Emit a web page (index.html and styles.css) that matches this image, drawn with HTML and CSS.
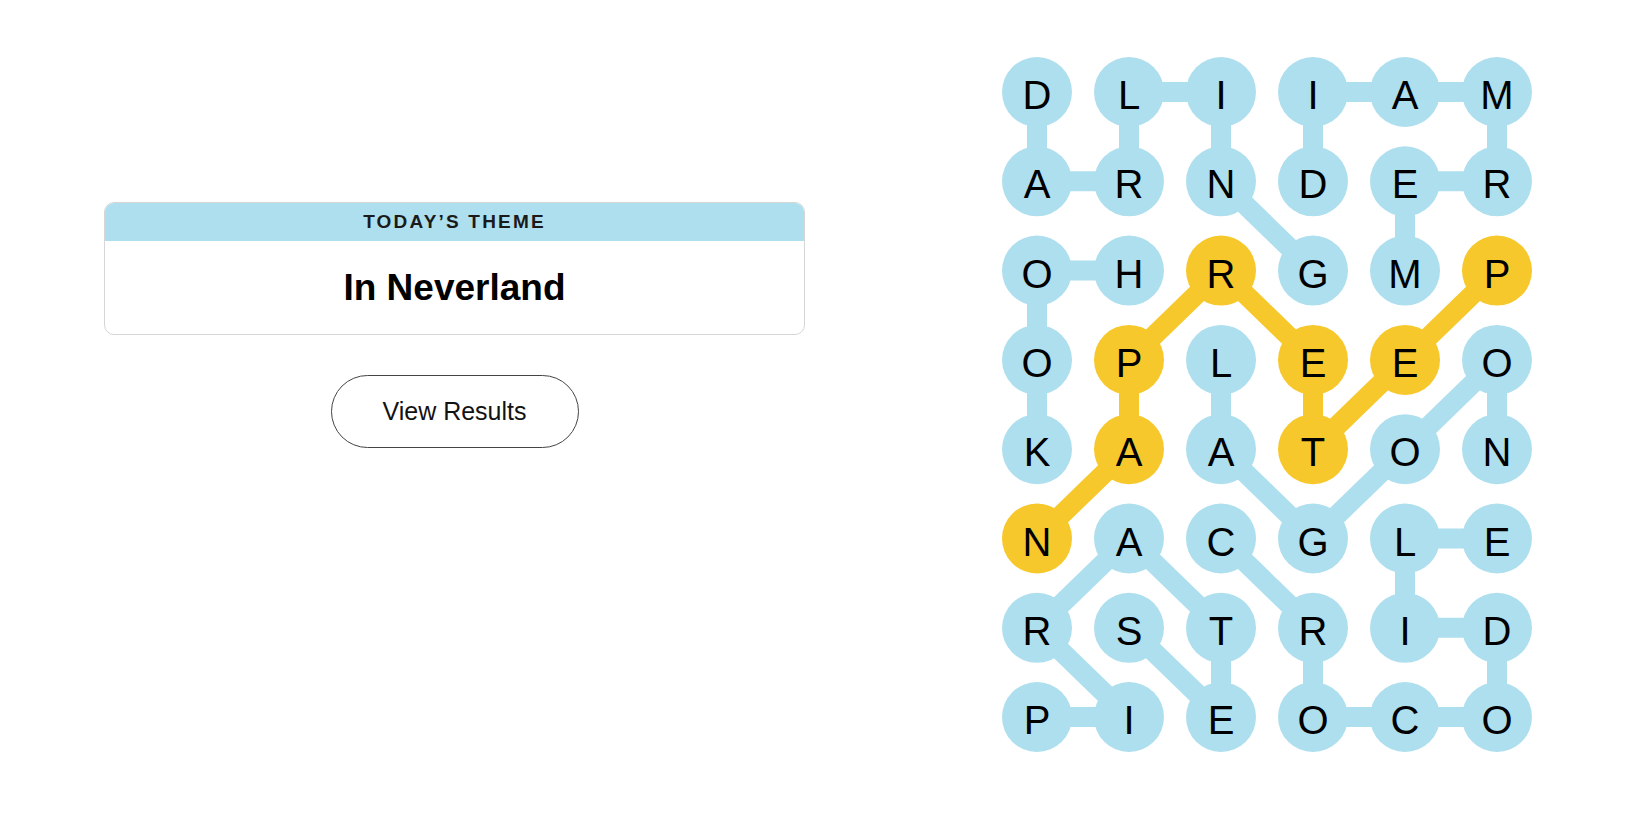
FILE: index.html
```html
<!DOCTYPE html>
<html lang="en">
<head>
<meta charset="utf-8">
<title>Strands</title>
<link rel="stylesheet" href="styles.css">
</head>
<body>
<main class="page">
  <section class="left">
    <div class="theme-card">
      <div class="theme-head">TODAY’S THEME</div>
      <div class="theme-body">In Neverland</div>
    </div>
    <button class="results-btn" type="button">View Results</button>
  </section>
  <section class="board">
    <svg class="board-svg" width="530" height="695" viewBox="0 0 530 695" xmlns="http://www.w3.org/2000/svg">
      <g class="links blue">
        <line x1="127" y1="35" x2="219" y2="35"/>
        <line x1="311" y1="35" x2="403" y2="35"/>
        <line x1="403" y1="35" x2="495" y2="35"/>
        <line x1="35" y1="35" x2="35" y2="124.3"/>
        <line x1="127" y1="35" x2="127" y2="124.3"/>
        <line x1="219" y1="35" x2="219" y2="124.3"/>
        <line x1="311" y1="35" x2="311" y2="124.3"/>
        <line x1="495" y1="35" x2="495" y2="124.3"/>
        <line x1="35" y1="124.3" x2="127" y2="124.3"/>
        <line x1="403" y1="124.3" x2="495" y2="124.3"/>
        <line x1="219" y1="124.3" x2="311" y2="213.6"/>
        <line x1="403" y1="124.3" x2="403" y2="213.6"/>
        <line x1="35" y1="213.6" x2="127" y2="213.6"/>
        <line x1="35" y1="213.6" x2="35" y2="302.9"/>
        <line x1="35" y1="302.9" x2="35" y2="392.2"/>
        <line x1="219" y1="302.9" x2="219" y2="392.2"/>
        <line x1="495" y1="302.9" x2="495" y2="392.2"/>
        <line x1="495" y1="302.9" x2="403" y2="392.2"/>
        <line x1="219" y1="392.2" x2="311" y2="481.5"/>
        <line x1="403" y1="392.2" x2="311" y2="481.5"/>
        <line x1="403" y1="481.5" x2="495" y2="481.5"/>
        <line x1="127" y1="481.5" x2="35" y2="570.8"/>
        <line x1="127" y1="481.5" x2="219" y2="570.8"/>
        <line x1="219" y1="481.5" x2="311" y2="570.8"/>
        <line x1="403" y1="481.5" x2="403" y2="570.8"/>
        <line x1="403" y1="570.8" x2="495" y2="570.8"/>
        <line x1="495" y1="570.8" x2="495" y2="660"/>
        <line x1="35" y1="570.8" x2="127" y2="660"/>
        <line x1="127" y1="570.8" x2="219" y2="660"/>
        <line x1="219" y1="570.8" x2="219" y2="660"/>
        <line x1="311" y1="570.8" x2="311" y2="660"/>
        <line x1="35" y1="660" x2="127" y2="660"/>
        <line x1="311" y1="660" x2="403" y2="660"/>
        <line x1="403" y1="660" x2="495" y2="660"/>
      </g>
      <g class="links gold">
        <line x1="35" y1="481.5" x2="127" y2="392.2"/>
        <line x1="127" y1="392.2" x2="127" y2="302.9"/>
        <line x1="127" y1="302.9" x2="219" y2="213.6"/>
        <line x1="219" y1="213.6" x2="311" y2="302.9"/>
        <line x1="311" y1="302.9" x2="311" y2="392.2"/>
        <line x1="311" y1="392.2" x2="403" y2="302.9"/>
        <line x1="403" y1="302.9" x2="495" y2="213.6"/>
      </g>
      <g class="cells">
        <g class="cell blue"><circle cx="35" cy="35" r="35"/><text x="35" y="52">D</text></g>
        <g class="cell blue"><circle cx="127" cy="35" r="35"/><text x="127" y="52">L</text></g>
        <g class="cell blue"><circle cx="219" cy="35" r="35"/><text x="219" y="52">I</text></g>
        <g class="cell blue"><circle cx="311" cy="35" r="35"/><text x="311" y="52">I</text></g>
        <g class="cell blue"><circle cx="403" cy="35" r="35"/><text x="403" y="52">A</text></g>
        <g class="cell blue"><circle cx="495" cy="35" r="35"/><text x="495" y="52">M</text></g>

        <g class="cell blue"><circle cx="35" cy="124.3" r="35"/><text x="35" y="141.3">A</text></g>
        <g class="cell blue"><circle cx="127" cy="124.3" r="35"/><text x="127" y="141.3">R</text></g>
        <g class="cell blue"><circle cx="219" cy="124.3" r="35"/><text x="219" y="141.3">N</text></g>
        <g class="cell blue"><circle cx="311" cy="124.3" r="35"/><text x="311" y="141.3">D</text></g>
        <g class="cell blue"><circle cx="403" cy="124.3" r="35"/><text x="403" y="141.3">E</text></g>
        <g class="cell blue"><circle cx="495" cy="124.3" r="35"/><text x="495" y="141.3">R</text></g>

        <g class="cell blue"><circle cx="35" cy="213.6" r="35"/><text x="35" y="230.6">O</text></g>
        <g class="cell blue"><circle cx="127" cy="213.6" r="35"/><text x="127" y="230.6">H</text></g>
        <g class="cell gold"><circle cx="219" cy="213.6" r="35"/><text x="219" y="230.6">R</text></g>
        <g class="cell blue"><circle cx="311" cy="213.6" r="35"/><text x="311" y="230.6">G</text></g>
        <g class="cell blue"><circle cx="403" cy="213.6" r="35"/><text x="403" y="230.6">M</text></g>
        <g class="cell gold"><circle cx="495" cy="213.6" r="35"/><text x="495" y="230.6">P</text></g>

        <g class="cell blue"><circle cx="35" cy="302.9" r="35"/><text x="35" y="319.9">O</text></g>
        <g class="cell gold"><circle cx="127" cy="302.9" r="35"/><text x="127" y="319.9">P</text></g>
        <g class="cell blue"><circle cx="219" cy="302.9" r="35"/><text x="219" y="319.9">L</text></g>
        <g class="cell gold"><circle cx="311" cy="302.9" r="35"/><text x="311" y="319.9">E</text></g>
        <g class="cell gold"><circle cx="403" cy="302.9" r="35"/><text x="403" y="319.9">E</text></g>
        <g class="cell blue"><circle cx="495" cy="302.9" r="35"/><text x="495" y="319.9">O</text></g>

        <g class="cell blue"><circle cx="35" cy="392.2" r="35"/><text x="35" y="409.2">K</text></g>
        <g class="cell gold"><circle cx="127" cy="392.2" r="35"/><text x="127" y="409.2">A</text></g>
        <g class="cell blue"><circle cx="219" cy="392.2" r="35"/><text x="219" y="409.2">A</text></g>
        <g class="cell gold"><circle cx="311" cy="392.2" r="35"/><text x="311" y="409.2">T</text></g>
        <g class="cell blue"><circle cx="403" cy="392.2" r="35"/><text x="403" y="409.2">O</text></g>
        <g class="cell blue"><circle cx="495" cy="392.2" r="35"/><text x="495" y="409.2">N</text></g>

        <g class="cell gold"><circle cx="35" cy="481.5" r="35"/><text x="35" y="498.5">N</text></g>
        <g class="cell blue"><circle cx="127" cy="481.5" r="35"/><text x="127" y="498.5">A</text></g>
        <g class="cell blue"><circle cx="219" cy="481.5" r="35"/><text x="219" y="498.5">C</text></g>
        <g class="cell blue"><circle cx="311" cy="481.5" r="35"/><text x="311" y="498.5">G</text></g>
        <g class="cell blue"><circle cx="403" cy="481.5" r="35"/><text x="403" y="498.5">L</text></g>
        <g class="cell blue"><circle cx="495" cy="481.5" r="35"/><text x="495" y="498.5">E</text></g>

        <g class="cell blue"><circle cx="35" cy="570.8" r="35"/><text x="35" y="587.8">R</text></g>
        <g class="cell blue"><circle cx="127" cy="570.8" r="35"/><text x="127" y="587.8">S</text></g>
        <g class="cell blue"><circle cx="219" cy="570.8" r="35"/><text x="219" y="587.8">T</text></g>
        <g class="cell blue"><circle cx="311" cy="570.8" r="35"/><text x="311" y="587.8">R</text></g>
        <g class="cell blue"><circle cx="403" cy="570.8" r="35"/><text x="403" y="587.8">I</text></g>
        <g class="cell blue"><circle cx="495" cy="570.8" r="35"/><text x="495" y="587.8">D</text></g>

        <g class="cell blue"><circle cx="35" cy="660" r="35"/><text x="35" y="677">P</text></g>
        <g class="cell blue"><circle cx="127" cy="660" r="35"/><text x="127" y="677">I</text></g>
        <g class="cell blue"><circle cx="219" cy="660" r="35"/><text x="219" y="677">E</text></g>
        <g class="cell blue"><circle cx="311" cy="660" r="35"/><text x="311" y="677">O</text></g>
        <g class="cell blue"><circle cx="403" cy="660" r="35"/><text x="403" y="677">C</text></g>
        <g class="cell blue"><circle cx="495" cy="660" r="35"/><text x="495" y="677">O</text></g>
      </g>
    </svg>
  </section>
</main>
</body>
</html>
```

FILE: styles.css
```css
* {
  box-sizing: border-box;
}

html, body {
  margin: 0;
  padding: 0;
  background: #ffffff;
}

body {
  font-family: "Liberation Sans", Arial, sans-serif;
  color: #000000;
}

.page {
  display: flex;
  width: 1650px;
  height: 825px;
  overflow: hidden;
}

.left {
  display: flex;
  flex-direction: column;
  align-items: center;
  width: 701px;
  margin-left: 104px;
  padding-top: 202px;
}

.theme-card {
  width: 701px;
  border: 1px solid #d6d6d6;
  border-radius: 10px;
  overflow: hidden;
}

.theme-head {
  height: 38px;
  background: #aedfee;
  display: flex;
  align-items: center;
  justify-content: center;
  font-size: 19px;
  font-weight: 700;
  letter-spacing: 2.2px;
  color: #1a1a1a;
}

.theme-body {
  height: 93px;
  display: flex;
  align-items: center;
  justify-content: center;
  font-size: 37px;
  font-weight: 700;
  color: #000000;
}

.results-btn {
  margin-top: 40px;
  width: 248px;
  height: 73px;
  border: 1px solid #444444;
  border-radius: 37px;
  background: #ffffff;
  font-family: "Liberation Sans", Arial, sans-serif;
  font-size: 25px;
  color: #121212;
  padding: 0;
  cursor: pointer;
}

.board {
  margin-left: 197px;
  padding-top: 57px;
}

.board-svg {
  display: block;
}

.links line {
  stroke-width: 20;
  stroke-linecap: round;
}

.links.blue line {
  stroke: #aedfee;
}

.links.gold line {
  stroke: #f6c82c;
}

.cell.blue circle {
  fill: #aedfee;
}

.cell.gold circle {
  fill: #f6c82c;
}

.cell text {
  font-family: "Liberation Sans", Arial, sans-serif;
  font-size: 40px;
  fill: #000000;
  text-anchor: middle;
}
```
